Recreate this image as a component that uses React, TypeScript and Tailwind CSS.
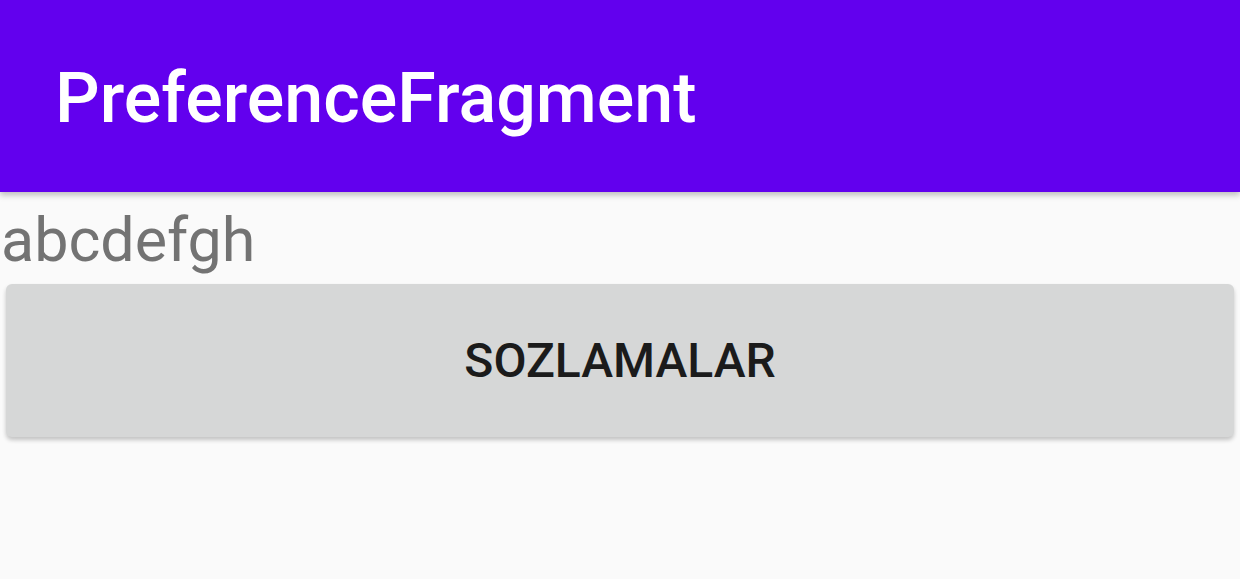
import React from "react";

export default function App() {
  return (
    <div className="w-[1240px] h-[579px] bg-[#fafafa] overflow-hidden flex flex-col" style={{ fontFamily: "Roboto, 'Noto Sans', sans-serif" }}>
      <div className="h-[192px] bg-[#6200ee] flex items-start pl-[55px] pt-[63px] shadow-[0_3px_6px_rgba(0,0,0,0.25)] relative z-10 shrink-0">
        <span className="text-white text-[70px] font-medium leading-none">PreferenceFragment</span>
      </div>
      <div className="flex flex-col">
        <div className="pl-[1px] pt-[13px] text-[61px] leading-[71px] text-[#737373]">abcdefgh</div>
        <div className="px-[6px] pt-[8px]">
          <button className="w-full h-[153px] bg-[#d6d7d7] rounded-[6px] shadow-[0_3px_4px_rgba(0,0,0,0.22)] flex items-center justify-center text-[48px] font-medium text-[#1b1b1b]">
            SOZLAMALAR
          </button>
        </div>
      </div>
    </div>
  );
}
